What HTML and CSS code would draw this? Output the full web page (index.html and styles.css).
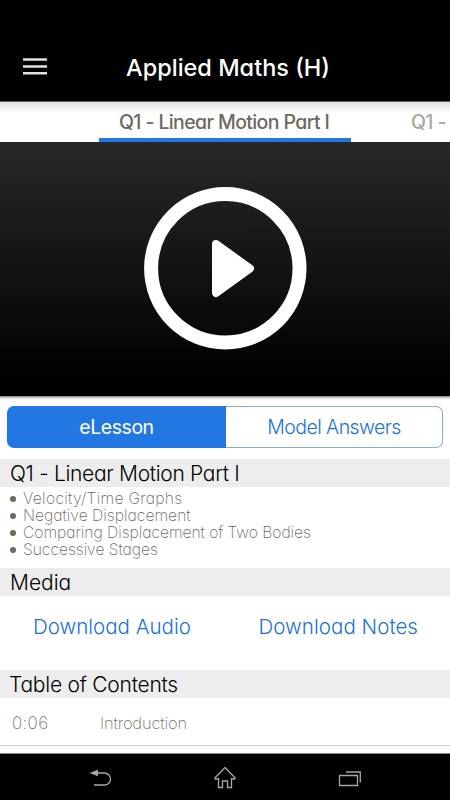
FILE: index.html
```html
<!DOCTYPE html>
<html lang="en">
<head>
<meta charset="utf-8">
<meta name="viewport" content="width=device-width">
<title>Applied Maths (H)</title>
<link rel="stylesheet" href="styles.css">
</head>
<body>
<header class="header">
  <svg class="menu" width="24" height="17" viewBox="0 0 24 17"><path d="M0 1.500h24M0 8.500h24M0 15.200h24" stroke="#e0e2e0" stroke-width="2.600"/></svg>
  <h1 class="title">Applied Maths (H)</h1>
</header>
<nav class="tabs">
  <div class="tab active"><span>Q1 - Linear Motion Part I</span></div>
  <div class="tab next"><span>Q1 -</span></div>
</nav>
<section class="video">
  <svg width="164" height="164" viewBox="0 0 164 164">
    <circle cx="82.300" cy="82.300" r="74.200" fill="none" stroke="#fff" stroke-width="14"/>
    <path d="M73 58L107 82.500L73 107z" fill="#fff" stroke="#fff" stroke-width="8" stroke-linejoin="round"/>
  </svg>
</section>
<main class="content">
  <div class="segments">
    <div class="segment selected"><span>eLesson</span></div>
    <div class="segment"><span class="answers">Model Answers</span></div>
  </div>
  <h2 class="heading lesson">Q1 - Linear Motion Part I</h2>
  <ul class="topics">
    <li class="t1">Velocity/Time Graphs</li>
    <li class="t2">Negative Displacement</li>
    <li class="t3">Comparing Displacement of Two Bodies</li>
    <li class="t4">Successive Stages</li>
  </ul>
  <h2 class="heading media">Media</h2>
  <div class="downloads">
    <a class="audio">Download Audio</a>
    <a class="notes">Download Notes</a>
  </div>
  <h2 class="heading contents">Table of Contents</h2>
  <div class="row"><span class="time">0:06</span><span class="chapter">Introduction</span></div>
</main>
<footer class="navbar">
  <svg width="24" height="20" viewBox="0 0 24 20" fill="none" stroke="#a8a8a8" stroke-width="1.300"><path d="M8 5h8.500a6 6 0 0 1 0 12H6"/><path d="M1.500 5L10 1.800v6.400z" fill="#a8a8a8" stroke="none"/></svg>
  <svg width="24" height="24" viewBox="0 0 24 24" fill="none" stroke="#a8a8a8" stroke-width="1.300"><path d="M12 1.500L1.800 12l1 1.200 2.700-.7v9h4v-6.500h5v6.500h4v-9l2.700.7 1-1.200z"/></svg>
  <svg width="24" height="20" viewBox="0 0 24 20" fill="none" stroke="#a8a8a8" stroke-width="1.300"><path d="M2.500 7.500h18v10h-18z"/><path d="M9 4h14.300v10.500"/></svg>
</footer>
</body>
</html>
```
FILE: styles.css
```css
* { box-sizing: border-box; }
body {
  margin: 0;
  width: 450px;
  height: 800px;
  overflow: hidden;
  display: flex;
  flex-direction: column;
  background: #fff;
  font-family: Inter, "Liberation Sans", sans-serif;
  font-feature-settings: "cv11" 1;
  font-weight: 300;
}
h1, h2, ul { margin: 0; padding: 0; }
span, a, li, h1, h2 { white-space: nowrap; }
.header {
  height: 102px;
  flex: none;
  display: flex;
  align-items: center;
  padding: 35px 0 0 23px;
  background: #000;
  border-bottom: 1px solid #625d60;
}
.menu { margin-right: 79px; margin-top: -4px; }
.title { color: #fff; font-size: 23.500px; line-height: 28px; font-weight: 500; }
.tabs {
  height: 40px;
  flex: none;
  display: flex;
  overflow: hidden;
  padding-left: 99px;
  background: linear-gradient(#ddd, #fff 11px);
}
.tab { color: #70675f; font-size: 19.500px; font-weight: 500; line-height: 41px; letter-spacing: -.62px; }
.active { width: 252px; padding-left: 20px; border-bottom: 4px solid #2377e2; }
.next { padding-left: 60px; color: #aaa6a2; }
.video {
  height: 254px;
  flex: none;
  display: flex;
  justify-content: center;
  padding-top: 44px;
  background: linear-gradient(#282828, #000 94%);
}
.content { height: 357px; flex: none; padding-top: 10px; background: linear-gradient(#777, #ddd 2px, #fff 4px); }
.segments { height: 42px; margin: 0 7px; display: flex; }
.segment {
  flex: 1;
  display: flex;
  align-items: center;
  justify-content: center;
  border: 1px solid #80aee9;
  border-left: 0;
  border-radius: 0 7px 7px 0;
  color: #1672df;
  font-size: 19.500px;
  letter-spacing: -.57px;
}
.selected {
  flex: 0 0 219px;
  border: 0;
  border-radius: 7px 0 0 7px;
  background: #2377e2;
  color: #fff;
  font-weight: 400;
  letter-spacing: -.45px;
}
.heading { height: 28px; line-height: 29px; padding-left: 10px; background: #ededed; color: #000; font-size: 21px; font-weight: 300; }
.lesson { margin-top: 11px; letter-spacing: -.32px; }
.contents { letter-spacing: -.25px; padding-left: 9px; }
.topics { height: 81px; padding-top: 3px; list-style: none; color: #70675f; font-size: 15.700px; line-height: 17px; }
.topics li { display: flex; align-items: center; padding-left: 10px; font-weight: 200; }
.topics li::before { content: ""; flex: none; width: 6px; height: 6px; margin-right: 7px; border-radius: 50%; background: #70675f; }
.t1 { letter-spacing: .29px; }
.t3 { letter-spacing: -.06px; }
.t4 { letter-spacing: -.05px; }
.downloads { height: 74px; display: flex; justify-content: space-between; padding: 14px 32px 0 33px; color: #1672df; font-size: 20.500px; line-height: 34px; }
.notes { letter-spacing: .05px; }
.row { height: 48px; display: flex; align-items: center; padding: 2px 0 0 12px; color: #77716a; font-size: 17px; font-weight: 200; border-bottom: 1px solid #cfcfc5; }
.time { width: 88px; letter-spacing: .3px; }
.chapter { font-size: 16.500px; letter-spacing: -.2px; }
.navbar {
  height: 47px;
  flex: none;
  display: flex;
  align-items: center;
  justify-content: space-between;
  padding: 2px 89px 0 88px;
  background: #000;
  border-top: 1px solid #888;
}
```
